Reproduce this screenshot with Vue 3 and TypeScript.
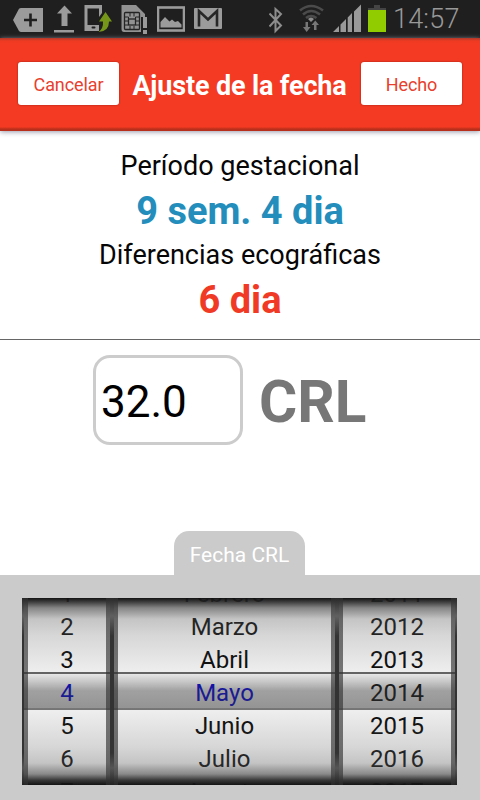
<script setup lang="ts">
import { ref } from 'vue'

interface Wheel {
  name: string
  items: string[]
  highlighted: boolean
}

const crl = ref('32.0')

const wheels: Wheel[] = [
  { name: 'day', items: ['1', '2', '3', '4', '5', '6', '7'], highlighted: true },
  { name: 'month', items: ['Febrero', 'Marzo', 'Abril', 'Mayo', 'Junio', 'Julio', 'Agosto'], highlighted: true },
  { name: 'year', items: ['2011', '2012', '2013', '2014', '2015', '2016', '2017'], highlighted: false },
]
</script>

<template>
  <div class="screen">
    <div class="status">
      <div class="icons">
        <svg width="31" height="38" viewBox="13 0 31 38">
          <path d="M13 20 19 8.700Q20 8 21 8H43V32H21Q20 32 19 31Z" fill="#9b9b9b" />
          <path d="M24 20H37M30.500 13.500V26.500" stroke="#1f1f1f" stroke-width="2.600" />
        </svg>
        <svg width="22" height="38" viewBox="53 0 22 38">
          <path d="M64.500 5.500 72 13.500H67.500V26H61.500V13.500H57Z" fill="#9b9b9b" />
          <path d="M54 30H74V32.500H54Z" fill="#9b9b9b" />
        </svg>
        <svg width="28" height="38" viewBox="85 0 28 38">
          <path d="M85.500 5H103V13L100 17V8.500H88.500V25H100V31H85.500Z" fill="#9b9b9b" />
          <rect x="92.500" y="26.500" width="4" height="2" rx="1" fill="#1f1f1f" />
          <path d="M106.500 12 113 21.500H110Q110 31.500 99.500 32Q104.500 28.500 104 21.500H100Z" fill="#76961a" />
        </svg>
        <svg width="27" height="38" viewBox="123 0 27 38">
          <path d="M123.500 5H138L147 14V17H143V32H126Q123.500 32 123.500 29Z" fill="#929292" />
          <rect x="126.500" y="12.500" width="15" height="17" rx="1" fill="none" stroke="#242424" stroke-width="1.300" />
          <rect x="130.500" y="19" width="7" height="6" fill="none" stroke="#242424" stroke-width="1.300" />
          <path d="M127 17H130.500V19M127 21H130M127 25H130M137.500 19V17H141M138 21H141M138 25H141M132 13V16.500M136 13V16.500M132 26V29M136 26V29" fill="none" stroke="#242424" stroke-width="1" />
          <path d="M145 17H149V28H145ZM145 30H149V34H145Z" fill="#999" />
        </svg>
        <svg width="28" height="38" viewBox="158 0 28 38">
          <rect x="159" y="7.500" width="26" height="23" fill="none" stroke="#9b9b9b" stroke-width="2.600" />
          <path d="M161.500 27.500V22L166 17 170.500 21.500 173 19.500 176 22 179 21 182.500 24.500V27.500Z" fill="#9b9b9b" />
        </svg>
        <svg width="28" height="38" viewBox="194 0 28 38">
          <rect x="194" y="8" width="28" height="21" rx="1" fill="#9b9b9b" />
          <path d="M199 26.500V11L208 19.500 217 11V26.500" fill="none" stroke="#272727" stroke-width="2.600" />
        </svg>
      </div>
      <div class="signals">
        <svg width="14" height="38" viewBox="268 0 14 38">
          <path d="M268.500 13.500 280 25.500 274.500 31V9L280 14 268.500 26.500" fill="none" stroke="#8d8d8d" stroke-width="2" />
        </svg>
        <svg width="26" height="38" viewBox="297 0 26 38">
          <g fill="none" stroke="#4b4b4b" stroke-width="2.600">
            <path d="M299 10.500Q310 1.500 322 10.500" />
            <path d="M302 14.500Q310 7.500 319 14.500" />
            <path d="M305 18Q310 14 315.500 18" />
          </g>
          <path d="M307 19Q310 16 313 19L310 22Z" fill="#8d8d8d" />
          <path d="M304.500 22H307V27H309.500L305.700 32 302 27H304.500ZM313 30H315.500V25H318L314.300 20.500 310.500 25H313Z" fill="#777" />
        </svg>
        <svg width="29" height="38" viewBox="332 0 29 38">
          <path d="M332 32 338 26V32ZM339.500 24.500 345 19V32H339.500ZM346.700 17.500 351 13V32H346.700ZM353 11.500 360 4.500V32H353Z" fill="#999" />
        </svg>
        <svg width="18" height="38" viewBox="367 0 18 38">
          <path d="M373 5H379V8H385V11H367V8H373Z" fill="#444" />
          <rect x="367" y="10" width="18" height="22" fill="#91cc00" />
        </svg>
        <span class="clock">14:57</span>
      </div>
    </div>

    <header class="bar">
      <button class="action cancel">Cancelar</button>
      <h1>Ajuste de la fecha</h1>
      <button class="action done">Hecho</button>
    </header>

    <section class="summary">
      <div class="label period">Período gestacional</div>
      <div class="value blue">9 sem. 4 dia</div>
      <div class="label diff">Diferencias ecográficas</div>
      <div class="value red">6 dia</div>
    </section>

    <section class="measure">
      <input v-model="crl" class="field" type="text">
      <span class="unit">CRL</span>
    </section>

    <div class="tab">Fecha CRL</div>
    <section class="tray">
      <div class="picker">
        <div v-for="wheel in wheels" :key="wheel.name" class="wheel">
          <div class="reel">
            <div
              v-for="(item, i) in wheel.items"
              :key="item"
              class="item"
              :class="{ selected: wheel.highlighted && i === 3 }"
            >{{ item }}</div>
          </div>
          <div class="band"></div>
          <div class="shade"></div>
        </div>
      </div>
    </section>
  </div>
</template>

<style>
body {
  margin: 0;
}
</style>

<style scoped>
.screen {
  width: 480px;
  height: 800px;
  overflow: hidden;
  display: flex;
  flex-direction: column;
  background: #fff;
  font-family: Roboto, "Liberation Sans", sans-serif;
}
.status {
  height: 38px;
  flex: none;
  display: flex;
  justify-content: space-between;
  background: #1f1f1f;
  padding: 0 18px 0 13px;
}
.status svg {
  display: block;
  flex: none;
}
.icons {
  display: flex;
  gap: 9px;
}
.signals {
  display: flex;
  gap: 7px;
}
.signals svg:first-child {
  margin-right: 8px;
}
.signals svg:nth-child(2) {
  margin-right: 2px;
}
.signals svg:nth-child(3) {
  margin-right: -1px;
}
.clock {
  width: 69px;
  color: #999;
  font-size: 27px;
  line-height: 38px;
  font-weight: 300;
  letter-spacing: 0.2px;
  white-space: nowrap;
}
.bar {
  height: 93px;
  flex: none;
  box-sizing: border-box;
  display: flex;
  align-items: center;
  justify-content: space-between;
  padding: 0 18px 3px;
  background: linear-gradient(#b03a2a, #ef3a22 3px, #f43a22 6px, #f43a22 89px, #b8301c 91px, #b8301c);
  box-shadow: 0 1px 5px #99a;
}
.action {
  width: 101px;
  height: 43px;
  flex: none;
  border: 0;
  border-radius: 3px;
  padding: 2px 0 0;
  background: #fff;
  color: #e8402e;
  font: 400 18px Roboto, sans-serif;
  letter-spacing: -0.1px;
  box-shadow: 0 0 2px #8b2115;
}
h1 {
  margin: 6px 1px 0 0;
  color: #fff;
  font-size: 27px;
  line-height: 32px;
  font-weight: 700;
  letter-spacing: -0.15px;
  white-space: nowrap;
}
.summary {
  height: 209px;
  flex: none;
  box-sizing: border-box;
  padding-top: 18px;
  border-bottom: 1px solid #666;
  text-align: center;
}
.label {
  color: #060606;
  font-size: 27px;
  line-height: 34px;
  height: 34px;
}
.value {
  font-size: 38px;
  line-height: 57px;
  height: 55px;
  font-weight: 700;
}
.blue {
  color: #238dbb;
}
.red {
  color: #f03a26;
}
.measure {
  flex: none;
  height: 191px;
  box-sizing: border-box;
  display: flex;
  align-items: flex-start;
  padding: 15px 0 0 93px;
}
.field {
  width: 150px;
  height: 90px;
  box-sizing: border-box;
  border: 3px solid #ccc;
  border-radius: 17px;
  padding: 4px 5px 0;
  background: #fff;
  color: #000;
  font: 400 44px Roboto, sans-serif;
}
.unit {
  margin: 2px 0 0 16px;
  color: #777;
  font-size: 58.500px;
  line-height: 90px;
  font-weight: 700;
}
.tab {
  width: 131px;
  height: 44px;
  flex: none;
  box-sizing: border-box;
  margin-left: 174px;
  padding-top: 2px;
  border-radius: 15px 15px 0 0;
  background: #cbcbcb;
  color: #fff;
  font-size: 21px;
  line-height: 44px;
  text-align: center;
}
.tray {
  flex: 1;
  background: #cbcbcb;
  padding: 23px 23px 0 22px;
}
.picker {
  height: 187px;
  box-sizing: border-box;
  display: grid;
  grid-template-columns: 86px 221px 116px;
  column-gap: 4px;
  padding: 0 2px;
  background: linear-gradient(#292929, #606060 18px, #333 38px, #333 155px, #555 170px, #222);
}
.wheel {
  display: grid;
  height: 187px;
  overflow: hidden;
  background: #eee;
}
.reel,
.band,
.shade {
  grid-area: 1 / 1;
  min-height: 0;
}
.reel {
  margin-top: -21px;
  height: 231px;
}
.item {
  height: 33px;
  color: #0c0c0c;
  font-size: 24px;
  line-height: 35px;
  text-align: center;
}
.item.selected {
  color: #0000d8;
}
.band {
  height: 38px;
  box-sizing: border-box;
  margin-top: 74px;
  border-top: 2px solid rgba(60, 60, 60, 0.55);
  border-bottom: 2px solid rgba(60, 60, 60, 0.65);
  background: linear-gradient(rgba(60, 60, 60, 0.04), rgba(60, 60, 60, 0.44) 50%, rgba(60, 60, 60, 0.5));
}
.shade {
  height: 187px;
  background:
    linear-gradient(90deg, rgba(50, 50, 50, 0.65) 4px, transparent 4px, transparent calc(100% - 4px), rgba(50, 50, 50, 0.65) calc(100% - 4px)),
    linear-gradient(rgba(15, 15, 15, 0.98), rgba(38, 38, 38, 0.88) 4px, rgba(70, 70, 70, 0.62) 10px, rgba(100, 100, 100, 0.3) 21px, rgba(120, 120, 120, 0.2) 37px, transparent 74px, transparent 113px, rgba(120, 120, 120, 0.2) 149px, rgba(100, 100, 100, 0.3) 165px, rgba(70, 70, 70, 0.6) 176px, rgba(38, 38, 38, 0.9) 182px, rgba(15, 15, 15, 0.98));
}
</style>
